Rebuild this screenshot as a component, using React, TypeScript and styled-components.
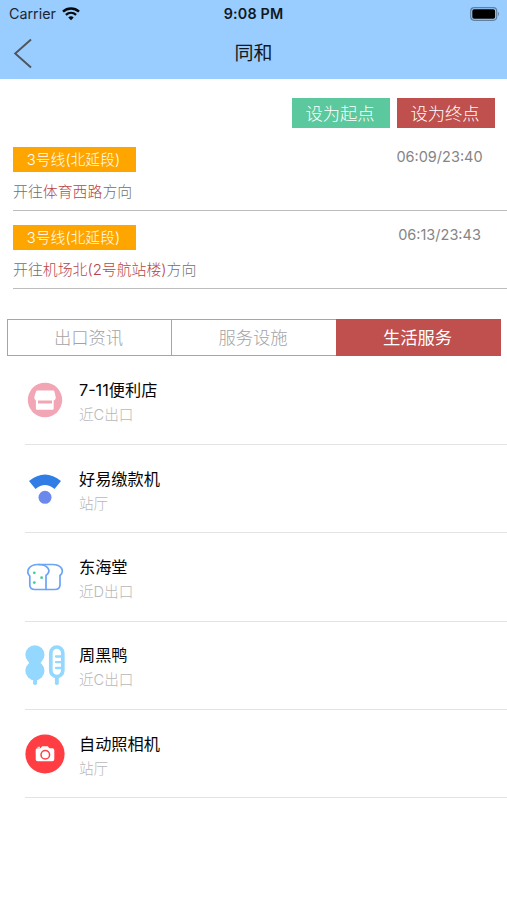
import React from 'react';
import styled, { createGlobalStyle } from 'styled-components';

const GlobalStyle = createGlobalStyle`
  * { box-sizing: border-box; }
  body {
    margin: 0;
    background: #fff;
    font-family: Inter, "Noto Sans CJK SC", sans-serif;
  }
`;

const Screen = styled.div`
  width: 507px;
  height: 900px;
  overflow: hidden;
  background: #fff;
`;

const Header = styled.header`
  height: 79px;
  background: #99ccff;
  color: #111820;
`;

const StatusBar = styled.div`
  height: 27px;
  padding: 0 7px 0 9px;
  display: grid;
  grid-template-columns: 1fr auto 1fr;
  align-items: center;
`;

const Carrier = styled.div`
  display: flex;
  align-items: center;
  gap: 6px;
  font-size: 14.3px;
  line-height: 27px;
  color: #1c2733;
`;

const Clock = styled.div`
  margin-left: -2px;
  font-size: 14.3px;
  font-weight: 600;
  letter-spacing: 0.2px;
  line-height: 27px;
`;

const BatterySlot = styled.div`
  display: flex;
  justify-content: flex-end;
`;

const NavBar = styled.div`
  height: 52px;
  padding: 0 13px;
  display: grid;
  grid-template-columns: 40px 1fr 40px;
  align-items: center;
`;

const BackButton = styled.button`
  border: 0;
  padding: 0;
  background: none;
  display: flex;
`;

const Title = styled.h1`
  margin: 0;
  padding-top: 1px;
  font-size: 19px;
  font-weight: 400;
  line-height: 52px;
  text-align: center;
`;

const Actions = styled.div`
  padding: 19px 12px 0 0;
  display: flex;
  justify-content: flex-end;
  gap: 7px;
`;

const ActionButton = styled.button<{ $color: string }>`
  width: 98px;
  height: 30px;
  border: 0;
  padding: 0 2px 0 0;
  background: ${(p) => p.$color};
  color: #fff;
  font-family: inherit;
  font-size: 17.3px;
  font-weight: 300;
  line-height: 31px;
`;

const Routes = styled.section`
  padding: 9px 0 0 13px;
`;

const Route = styled.div`
  height: 78px;
  padding-top: 14px;
  border-bottom: 1px solid #bdbdbd;
  display: grid;
  grid-template-columns: 1fr 135px;
  grid-template-rows: 25px 1fr;

  &:first-child {
    height: 74px;
    padding-top: 10px;
  }
`;

const LineTag = styled.div`
  width: 123px;
  height: 25px;
  padding-right: 2px;
  background: #ffa500;
  color: #fff;
  font-size: 14.8px;
  font-weight: 300;
  line-height: 26px;
  text-align: center;
  white-space: nowrap;
`;

const Hours = styled.div`
  font-size: 14.5px;
  line-height: 19px;
  color: #858585;
  text-align: center;
`;

const Direction = styled.div`
  grid-column: 1 / -1;
  padding-top: 1px;
  font-size: 14.9px;
  font-weight: 300;
  line-height: 38px;
  color: #707070;
`;

const Destination = styled.span`
  color: #b84545;
`;

const Tabs = styled.nav`
  margin: 30px 6px 0 7px;
  height: 37px;
  display: grid;
  grid-template-columns: 164px 165px 165px;
`;

const Tab = styled.button<{ $active?: boolean }>`
  padding: 1px 2px 0 0;
  border: 1px solid ${(p) => (p.$active ? '#c0504d' : '#a5a5a5')};
  border-right-width: ${(p) => (p.$active ? '1px' : '0')};
  background: ${(p) => (p.$active ? '#c0504d' : '#fff')};
  color: ${(p) => (p.$active ? '#fff' : '#a3a3a3')};
  font-family: inherit;
  font-size: 17.3px;
  font-weight: ${(p) => (p.$active ? 400 : 300)};
  line-height: 34px;
`;

const Services = styled.ul`
  list-style: none;
  margin: 0;
  padding: 0.5px 0 0 25px;
`;

const Service = styled.li`
  height: 88.4px;
  border-bottom: 1px solid #e3e3e3;
  display: grid;
  grid-template-columns: 40px 1fr;
  column-gap: 14px;
  align-items: center;

  svg { display: block; }
`;

const ServiceText = styled.div`
  padding-top: 5px;
`;

const ServiceName = styled.div`
  font-size: 16.2px;
  line-height: 26px;
  color: #050505;
`;

const ServicePlace = styled.div`
  font-size: 14.6px;
  font-weight: 300;
  line-height: 25px;
  color: #b8b8b8;
`;

const WifiIcon = () => (
  <svg width="18" height="14" viewBox="0 0 18 14" fill="none" stroke="#06090c">
    <path d="M1 4.7C5.5.5 12.500.5 17 4.700" strokeWidth="2.5" />
    <path d="M3.900 7.900C6.900 5.200 11.100 5.200 14.100 7.900" strokeWidth="2.300" />
    <path d="M6.300 10.400C8 9 10 9 11.700 10.400L9 13.200Z" fill="#06090c" stroke="none" />
  </svg>
);

const BatteryIcon = () => (
  <svg width="30" height="14" viewBox="0 0 30 14">
    <rect x="0.7" y="0.700" width="26" height="12.600" rx="3.500" fill="none" stroke="#617f9e" strokeWidth="1.200" />
    <rect x="2.300" y="2.300" width="22.800" height="9.400" rx="1.800" fill="#000" />
    <path d="M28 4.800Q30 7 28 9.200Z" fill="#617f9e" />
  </svg>
);

const BackIcon = () => (
  <svg width="20" height="32" viewBox="0 0 20 32" fill="none" stroke="#4f555b" strokeWidth="1.900">
    <path d="M18 1.500L2.200 15.500L18 29.500" />
  </svg>
);

const StoreIcon = () => (
  <svg width="40" height="40" viewBox="0 0 40 40">
    <circle cx="20" cy="20" r="17.200" fill="#f2a5b5" />
    <path d="M12.300 10.500H28.200Q29 10.500 29.400 11.500L30.700 17Q31 20 28.700 20.400V28.500Q28.700 29.700 27.500 29.700H12Q10.900 29.700 10.900 28.500V20.400Q9 19.500 9.300 17L11 11.500Q11.400 10.500 12.300 10.500Z" fill="#fff" />
    <path d="M13 22H27" stroke="#f2a5b5" strokeWidth="3" />
  </svg>
);

const SignalIcon = () => (
  <svg width="40" height="40" viewBox="0 0 40 40">
    <path d="M4 12Q20 -1 36 12L29.500 20Q20 12 10.500 20Z" fill="#2f7de5" />
    <circle cx="20" cy="28.300" r="6.500" fill="#6b89ec" />
  </svg>
);

const BreadIcon = () => (
  <svg width="40" height="40" viewBox="0 0 40 40" fill="none" stroke="#6ba4f7" strokeWidth="1.700">
    <path d="M4.800 19C.8 15 3 7.500 13 7.500C23 7.500 27 14 21 18.500V32.500H10Q4.800 32.500 4.800 28Z" />
    <path d="M13 7.500H27C37.500 7.500 39.500 14.500 35 18.500V28Q35 32.500 29.500 32.500H21" />
    <g fill="#35d49a" stroke="none">
      <circle cx="9.300" cy="15.800" r="1.400" />
      <circle cx="16.600" cy="20.700" r="1.400" />
      <circle cx="9.300" cy="25.600" r="1.400" />
    </g>
  </svg>
);

const SkewerIcon = () => (
  <svg width="40" height="40" viewBox="0 0 40 40">
    <g fill="#94d8ff">
      <circle cx="9.900" cy="9.800" r="9.600" />
      <circle cx="9.900" cy="25.700" r="9.600" />
      <rect x="4" y="14" width="11.800" height="7.500" />
      <rect x="8.100" y="31" width="3.900" height="9" rx="1.700" />
      <rect x="29.900" y="30" width="3.900" height="10" rx="1.700" />
    </g>
    <g fill="none" stroke="#94d8ff" strokeWidth="3.700">
      <rect x="25.800" y="2" width="12" height="29.500" rx="6" />
      <path d="M37 11.500H31M37 17.200H31M37 23H31" strokeWidth="2.300" strokeLinecap="round" />
    </g>
  </svg>
);

const CameraIcon = () => (
  <svg width="40" height="40" viewBox="0 0 40 40">
    <circle cx="20" cy="20" r="19.600" fill="#ff3d42" />
    <path d="M12.300 14.300H15.500L17.300 12.300H22.700L24.500 14.300H27.300Q29.300 14.300 29.300 16.300V25.300Q29.300 27.300 27.300 27.300H12.700Q10.700 27.300 10.700 25.300V15.800Q10.700 14.300 12.300 14.300Z" fill="#fff" />
    <rect x="12.500" y="12.800" width="2.500" height="1" fill="#fff" />
    <circle cx="20.300" cy="20.700" r="4.300" fill="none" stroke="#ff3d42" strokeWidth="1.500" />
  </svg>
);

const routes = [
  { line: '3号线(北延段)', hours: '06:09/23:40', destination: '体育西路' },
  { line: '3号线(北延段)', hours: '06:13/23:43', destination: '机场北(2号航站楼)' },
];

const services = [
  { name: '7-11便利店', place: '近C出口', Icon: StoreIcon },
  { name: '好易缴款机', place: '站厅', Icon: SignalIcon },
  { name: '东海堂', place: '近D出口', Icon: BreadIcon },
  { name: '周黑鸭', place: '近C出口', Icon: SkewerIcon },
  { name: '自动照相机', place: '站厅', Icon: CameraIcon },
];

export default function App() {
  return (
    <>
      <GlobalStyle />
      <Screen>
        <Header>
          <StatusBar>
            <Carrier>
              Carrier
              <WifiIcon />
            </Carrier>
            <Clock>9:08 PM</Clock>
            <BatterySlot>
              <BatteryIcon />
            </BatterySlot>
          </StatusBar>
          <NavBar>
            <BackButton aria-label="返回">
              <BackIcon />
            </BackButton>
            <Title>同和</Title>
          </NavBar>
        </Header>
        <Actions>
          <ActionButton $color="#5bc99d">设为起点</ActionButton>
          <ActionButton $color="#c0504d">设为终点</ActionButton>
        </Actions>
        <Routes>
          {routes.map((r) => (
            <Route key={r.destination}>
              <LineTag>{r.line}</LineTag>
              <Hours>{r.hours}</Hours>
              <Direction>
                开往<Destination>{r.destination}</Destination>方向
              </Direction>
            </Route>
          ))}
        </Routes>
        <Tabs>
          <Tab>出口资讯</Tab>
          <Tab>服务设施</Tab>
          <Tab $active>生活服务</Tab>
        </Tabs>
        <Services>
          {services.map(({ name, place, Icon }) => (
            <Service key={name}>
              <Icon />
              <ServiceText>
                <ServiceName>{name}</ServiceName>
                <ServicePlace>{place}</ServicePlace>
              </ServiceText>
            </Service>
          ))}
        </Services>
      </Screen>
    </>
  );
}
